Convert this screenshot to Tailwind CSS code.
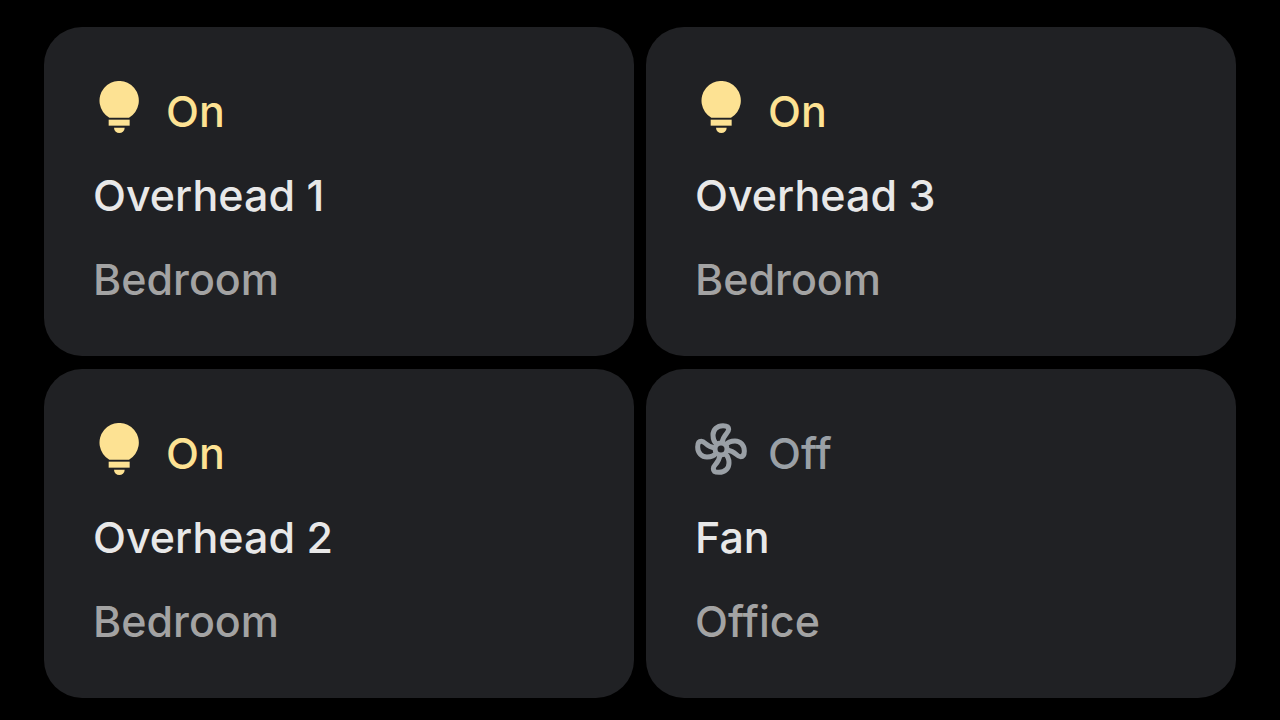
<!DOCTYPE html>
<html lang="en">
<head>
    <meta charset="UTF-8">
    <meta name="viewport" content="width=device-width, initial-scale=1.0">
    <title>Home controls</title>
    <script src="https://cdn.jsdelivr.net/npm/@tailwindcss/browser@4"></script>
</head>
<body class="bg-black font-['Inter',sans-serif] text-[43px] leading-[52px] font-medium">
    <svg class="hidden">
        <symbol id="bulb" viewBox="24 34 156 156">
            <path d="M73 144A59 59 0 1 1 132 144Z"/>
            <path d="M71 150h63v18H71z"/>
            <path d="M87 174h32a16 16 0 0 1-32 0z"/>
        </symbol>
        <symbol id="fan" viewBox="-78 -78 156 156">
            <g fill="none" stroke="currentColor" stroke-width="15" stroke-linejoin="round">
                <circle r="18"/>
                <path id="blade" d="M-12-14C-20-20-24-30-24-42C-24-58-12-70 6-70C17-70 23-66 23-59C23-46 7-46 3-18"/>
                <use href="#blade" transform="rotate(90)"/>
                <use href="#blade" transform="rotate(180)"/>
                <use href="#blade" transform="rotate(270)"/>
            </g>
        </symbol>
    </svg>
    <main class="min-h-screen grid grid-cols-2 grid-rows-2 gap-x-3 gap-y-[13px] px-11 pt-[27px] pb-[22px]">
        <button type="button" aria-pressed="true" class="flex flex-col justify-center items-start gap-8 px-[49px] pt-[3px] rounded-[38px] bg-[#202124] text-left">
            <span class="flex items-start gap-[21px] text-[#fde293]">
                <svg class="size-[52px] fill-current"><use href="#bulb"/></svg>
                <span class="pt-1">On</span>
            </span>
            <span class="text-[#e8e8e8]">Overhead 1</span>
            <span class="text-[#a3a3a3]">Bedroom</span>
        </button>
        <button type="button" aria-pressed="true" class="flex flex-col justify-center items-start gap-8 px-[49px] pt-[3px] rounded-[38px] bg-[#202124] text-left">
            <span class="flex items-start gap-[21px] text-[#fde293]">
                <svg class="size-[52px] fill-current"><use href="#bulb"/></svg>
                <span class="pt-1">On</span>
            </span>
            <span class="text-[#e8e8e8]">Overhead 3</span>
            <span class="text-[#a3a3a3]">Bedroom</span>
        </button>
        <button type="button" aria-pressed="true" class="flex flex-col justify-center items-start gap-8 px-[49px] pt-[3px] rounded-[38px] bg-[#202124] text-left">
            <span class="flex items-start gap-[21px] text-[#fde293]">
                <svg class="size-[52px] fill-current"><use href="#bulb"/></svg>
                <span class="pt-1">On</span>
            </span>
            <span class="text-[#e8e8e8]">Overhead 2</span>
            <span class="text-[#a3a3a3]">Bedroom</span>
        </button>
        <button type="button" aria-pressed="false" class="flex flex-col justify-center items-start gap-8 px-[49px] pt-[3px] rounded-[38px] bg-[#202124] text-left">
            <span class="flex items-start gap-[21px] text-[#9aa0a6]">
                <svg class="size-[52px]"><use href="#fan"/></svg>
                <span class="pt-1">Off</span>
            </span>
            <span class="text-[#e8e8e8]">Fan</span>
            <span class="text-[#a3a3a3]">Office</span>
        </button>
    </main>
</body>
</html>
